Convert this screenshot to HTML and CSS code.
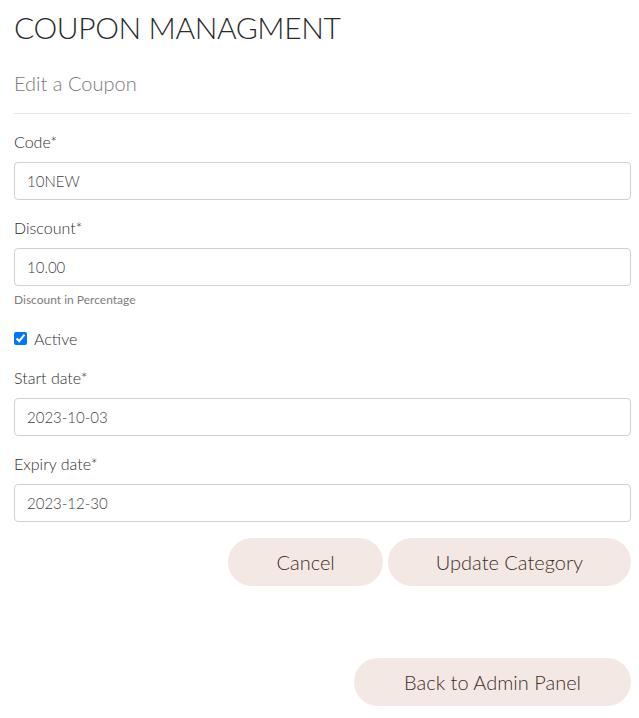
FILE: index.html
```html
<!DOCTYPE html>
<html lang="en">
<head>
<meta charset="utf-8">
<title>Coupon Managment</title>
<link rel="stylesheet" href="styles.css">
</head>
<body>
<main class="page">
  <h1 class="title">COUPON MANAGMENT</h1>
  <h2 class="subtitle">Edit a Coupon</h2>
  <hr class="divider">
  <form class="form">
    <div class="group">
      <label class="label" for="code">Code*</label>
      <input class="field" id="code" type="text" value="10NEW">
    </div>
    <div class="group">
      <label class="label" for="discount">Discount*</label>
      <input class="field" id="discount" type="text" value="10.00">
      <small class="help">Discount in Percentage</small>
    </div>
    <div class="group check">
      <input class="checkbox" id="active" type="checkbox" checked>
      <label class="check-label" for="active">Active</label>
    </div>
    <div class="group">
      <label class="label" for="start">Start date*</label>
      <input class="field" id="start" type="text" value="2023-10-03">
    </div>
    <div class="group last">
      <label class="label" for="expiry">Expiry date*</label>
      <input class="field" id="expiry" type="text" value="2023-12-30">
    </div>
    <div class="actions">
      <button class="btn" type="button">Cancel</button>
      <button class="btn" type="submit">Update Category</button>
    </div>
  </form>
  <div class="back">
    <button class="btn btn-wide" type="button">Back to Admin Panel</button>
  </div>
</main>
</body>
</html>
```
FILE: styles.css
```css
html, body {
  margin: 0;
  padding: 0;
  background: #ffffff;
}
body {
  font-family: Lato, "Noto Sans", sans-serif;
  color: #3a3a3a;
}
.page {
  padding: 0 8px 0 14px;
}
.title {
  margin: 0;
  padding-top: 8px;
  font-size: 30px;
  font-weight: 300;
  line-height: 38px;
  color: #2a2a2a;
  letter-spacing: -0.4px;
}
.subtitle {
  margin: 25px 0 0;
  font-size: 20px;
  font-weight: 300;
  line-height: 24px;
  color: #7a7a7a;
}
.divider {
  margin: 18px 0 0;
  border: 0;
  border-top: 1px solid #e6e6e6;
}
.form {
  margin-top: 16px;
}
.group {
  margin-bottom: 16px;
}
.group.last {
  margin-bottom: 16px;
}
.label {
  display: block;
  font-size: 16px;
  font-weight: 300;
  line-height: 24px;
  margin-bottom: 8px;
  color: #2f2f2f;
}
.field {
  display: block;
  box-sizing: border-box;
  width: 100%;
  height: 38px;
  padding: 0 12px;
  border: 1px solid #ced0d6;
  border-radius: 4px;
  font-family: inherit;
  font-size: 15px;
  font-weight: 300;
  color: #3f3f3f;
  background: #ffffff;
}
.help {
  display: block;
  margin-top: 4px;
  font-size: 12px;
  line-height: 20px;
  color: #7d7d7d;
}
.check {
  display: flex;
  align-items: center;
  height: 24px;
  gap: 7px;
}
.checkbox {
  margin: 0;
  width: 13px;
  height: 13px;
}
.check-label {
  font-size: 16px;
  font-weight: 300;
  color: #2f2f2f;
}
.actions {
  display: flex;
  justify-content: flex-end;
  gap: 5px;
}
.btn {
  height: 48px;
  padding: 0 48px;
  border: 0;
  border-radius: 24px;
  background: #f4e8e5;
  color: #3e2e2a;
  font-family: inherit;
  font-size: 20px;
  font-weight: 300;
}
.btn-wide {
  padding: 0 50px;
}
.back {
  display: flex;
  justify-content: flex-end;
  margin-top: 72px;
}
```
